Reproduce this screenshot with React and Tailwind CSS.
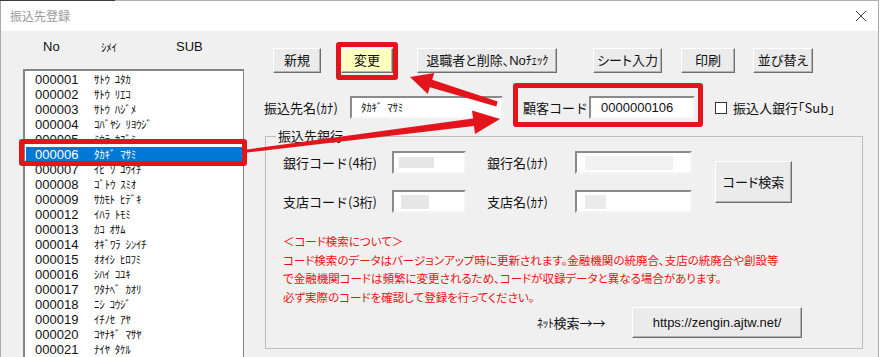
import React from "react";

const rows = [
  ["000001", "ｻﾄｳ ﾕﾀｶ"],
  ["000002", "ｻﾄｳ ﾘｴｺ"],
  ["000003", "ｻﾄｳ ﾊｼﾞﾒ"],
  ["000004", "ｺﾊﾞﾔｼ ﾘﾖｳｼﾞ"],
  ["000005", "ﾐｳﾗ ｶｽﾞﾐ"],
  ["000006", "ﾀｶｷﾞ ﾏｻﾐ"],
  ["000007", "ｲﾋﾞｿ ﾕｳｲﾁ"],
  ["000008", "ｺﾞﾄｳ ｽﾐｵ"],
  ["000009", "ｻｶﾓﾄ ﾋﾃﾞｷ"],
  ["000012", "ｲﾊﾗ ﾄﾓﾐ"],
  ["000013", "ｶｺ ｵｻﾑ"],
  ["000014", "ｵｷﾞﾜﾗ ｼﾝｲﾁ"],
  ["000015", "ｵｵｲｼ ﾋﾛﾌﾐ"],
  ["000016", "ｼﾊｲ ｺﾕｷ"],
  ["000017", "ﾜﾀﾅﾍﾞ ｶｵﾘ"],
  ["000018", "ﾆｼ ｺｳｼﾞ"],
  ["000019", "ｲﾁﾉｾ ｱﾔ"],
  ["000020", "ｺﾔﾅｷﾞ ﾏｻﾔ"],
  ["000021", "ﾅｲﾔ ﾀｹﾙ"],
];

// windows風ボタン
const btn =
  "flex items-center justify-center h-[25px] bg-[#ebebeb] border border-t-white border-l-white border-r-[#6e6e6e] border-b-[#6e6e6e] shadow-[inset_-1px_-1px_0_#b4b4b4] text-[13px] text-[#111] [font-feature-settings:'palt']";
const field =
  "h-[23px] bg-white border-2 border-t-[#8a8a8a] border-l-[#8a8a8a] border-r-[#f4f4f4] border-b-[#f4f4f4] flex items-center";
// 半角カナ
const kana = "text-[11px] tracking-[-0.3px] whitespace-pre font-['Noto_Sans_CJK_JP',sans-serif]";
const sp = (s) => s.replace(" ", "\u2002");

export default function App() {
  return (
    <div className="w-[881px] h-[357px] overflow-hidden relative bg-white font-['Liberation_Sans','Noto_Sans_CJK_JP',sans-serif] text-[#111]">
      <div className="w-[879px] h-[357px] bg-[#f0f0f0] border-l border-r border-[#a8a8a8]">
        {/* title bar */}
        <div className="h-[31px] bg-white border-t border-[#b0b0b0] flex items-center justify-between pl-[9px] pr-[10px]">
          <span className="text-[12px] text-[#9a9a9a] font-['Noto_Sans_CJK_JP',sans-serif]">振込先登録</span>
          <svg width="12" height="12" viewBox="0 0 12 12" className="mr-[1px]">
            <path d="M1 1 L11 11 M11 1 L1 11" stroke="#444" strokeWidth="1" />
          </svg>
        </div>

        <div className="flex">
          {/* left: list */}
          <div className="w-[262px] pl-[22px] shrink-0">
            <div className="h-[38px] flex items-center pb-[7px] text-[13px] leading-[16px]">
              <span className="w-[78px] pl-[20px]">No</span>
              <span className={`w-[75px] ${kana}`}>ｼﾒｲ</span>
              <span>SUB</span>
            </div>
            <div className="w-[221px] h-[300px] bg-white border-t-2 border-l-2 border-r border-[#848484] pl-px pt-px">
              {rows.map(([no, name], i) => (
                <div
                  key={no}
                  className={`h-[15px] grid grid-cols-[68px_1fr] items-center text-[13px] leading-[15px] ${
                    i === 5 ? "bg-[#0078d7] text-white" : ""
                  }`}
                >
                  <span className="pl-[9px]">{no}</span>
                  <span className={kana}>{sp(name)}</span>
                </div>
              ))}
            </div>
          </div>

          {/* right: form */}
          <div className="flex-1 pt-[17px]">
            <div className="flex items-start">
              <div className={`${btn} w-[48px] ml-[10px]`}>新規</div>
              <div className={`${btn} w-[52px] h-[25px] ml-[20px] !bg-[#ffffc0]`}>変更</div>
              <div className={`${btn} w-[140px] ml-[24px]`}>
                退職者と削除、No<span className="text-[12px] tracking-[-0.5px]">ﾁｪｯｸ</span>
              </div>
              <div className={`${btn} w-[69px] ml-[36px]`}>シート入力</div>
              <div className={`${btn} w-[54px] ml-[19px]`}>印刷</div>
              <div className={`${btn} w-[60px] ml-[18px]`}>並び替え</div>
            </div>

            <div className="flex items-center mt-[23px] text-[13px]">
              <span className="w-[86px] ml-px font-['Noto_Sans_CJK_JP',sans-serif]">振込先名(ｶﾅ)</span>
              <div className={`${field} w-[153px] h-[22px] pl-[9px]`}>
                <span className={kana}>{sp("ﾀｶｷﾞ ﾏｻﾐ")}</span>
              </div>
              <span className="ml-[20px] w-[66px] font-['Noto_Sans_CJK_JP',sans-serif]">顧客コード</span>
              <div className={`${field} w-[106px] h-[22px] pl-[10px]`}>0000000106</div>
              <div className="ml-[20px] w-[12px] h-[12px] bg-white border border-[#333]" />
              <span className="ml-[6px] font-['Noto_Sans_CJK_JP',sans-serif] [font-feature-settings:'palt']">振込人銀行｢Sub｣</span>
            </div>

            <fieldset className="mt-[9px] ml-[2px] w-[598px] h-[221px] border border-[#bdbdbd] text-[13px]">
              <legend className="ml-[10px] px-[2px] leading-[16px] font-['Noto_Sans_CJK_JP',sans-serif]">振込先銀行</legend>
              <div className="flex pl-[17px] mt-[7px]">
                <div className="flex flex-col gap-[16px] font-['Noto_Sans_CJK_JP',sans-serif]">
                  <div className="flex items-center">
                    <span className="w-[109px]">銀行コード(4桁)</span>
                    <div className={`${field} w-[74px] pl-[5px]`}>
                      <div className="w-[35px] h-[11px] bg-[#e6e6e6]" />
                    </div>
                    <span className="ml-[21px] w-[88px]">銀行名(ｶﾅ)</span>
                    <div className={`${field} w-[117px] pl-[8px]`}>
                      <div className="w-[88px] h-[14px] bg-[#f1f1f1]" />
                    </div>
                  </div>
                  <div className="flex items-center">
                    <span className="w-[109px]">支店コード(3桁)</span>
                    <div className={`${field} w-[74px] pl-[7px]`}>
                      <div className="w-[28px] h-[14px] bg-[#e6e6e6]" />
                    </div>
                    <span className="ml-[21px] w-[88px]">支店名(ｶﾅ)</span>
                    <div className={`${field} w-[117px] pl-[8px]`}>
                      <div className="w-[21px] h-[14px] bg-[#ebebeb]" />
                    </div>
                  </div>
                </div>
                <div className={`${btn} w-[77px] h-[42px] ml-[23px] mt-[10px] font-['Noto_Sans_CJK_JP',sans-serif]`}>
                  コード検索
                </div>
              </div>

              <div className="pl-[17px] mt-[19px] text-[11.5px] leading-[18.5px] text-[#ee1111] font-['Noto_Sans_CJK_JP',sans-serif] [font-feature-settings:'palt']">
                <div>＜コード検索について＞</div>
                <div>コード検索のデータはバージョンアップ時に更新されます。金融機関の統廃合、支店の統廃合や創設等</div>
                <div>で金融機関コードは頻繁に変更されるため、コードが収録データと異なる場合があります。</div>
                <div>必ず実際のコードを確認して登録を行ってください。</div>
              </div>

              <div className="flex items-center mt-[1px] pl-[271px]">
                <span className="w-[95px] font-['Noto_Sans_CJK_JP',sans-serif] [font-feature-settings:'palt']">
                  <span className="text-[12px] tracking-[-0.5px]">ﾈｯﾄ</span>検索→→
                </span>
                <div className={`${btn} w-[170px] h-[31px]`}>https://zengin.ajtw.net/</div>
              </div>
            </fieldset>
          </div>
        </div>
      </div>

      {/* 上端の暗い線 */}
      <div className="absolute left-0 top-0 w-[115px] h-px bg-[#3a3a3a]" />

      {/* 注釈: 赤枠 */}
      <div className="absolute left-[19px] top-[139px] w-[228px] h-[27px] border-[5px] border-[#e3141c] rounded-[3px]" />
      <div className="absolute left-[336px] top-[42px] w-[62px] h-[38px] border-[5px] border-[#e3141c] rounded-[3px]" />
      <div className="absolute left-[513px] top-[83px] w-[190px] h-[44px] border-[5px] border-[#e3141c] rounded-[3px]" />

      {/* 注釈: 矢印 */}
      <svg className="absolute left-0 top-0" width="881" height="357" viewBox="0 0 881 357">
        <polygon
          fill="#e3141c"
          points="247.1,152.5 474,126 475,134 500,119 472,110.5 473,118.5 246.9,149.5"
        />
        <polygon
          fill="#e3141c"
          points="497.7,101.6 432.2,79.7 434.3,73 410,77 427.7,94 429.8,87.3 496.3,106.4"
        />
      </svg>
    </div>
  );
}
